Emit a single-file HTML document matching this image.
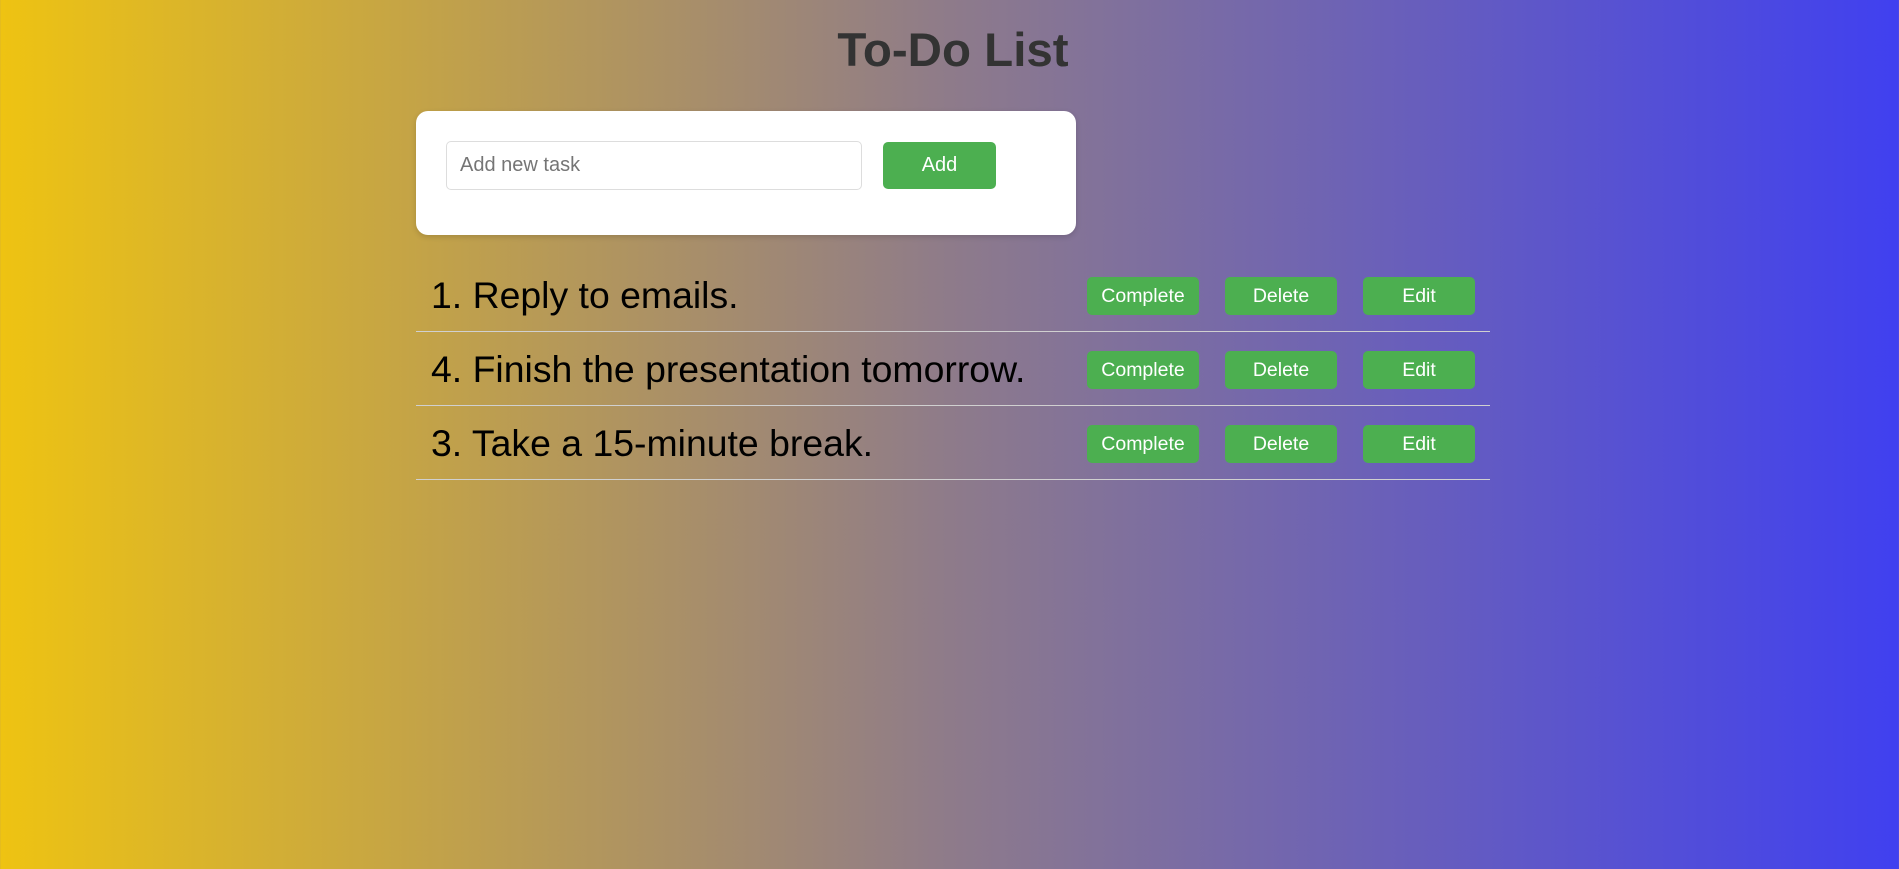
<!DOCTYPE html>
<html><head><meta charset="utf-8"><style>
*{box-sizing:border-box;margin:0;padding:0}
html,body{width:1899px;height:869px;overflow:hidden}
body{background:linear-gradient(to right,#eec312,#8e7b8a 50%,#4040f0);font-family:"Liberation Sans",Arial,sans-serif;position:relative}
h1{position:absolute;top:23px;left:0;width:1906px;text-align:center;font-size:47.5px;font-weight:bold;color:#333;line-height:56px}
.card{position:absolute;left:416px;top:111px;width:660px;height:124px;background:#fff;border-radius:12px;box-shadow:0 2px 6px rgba(0,0,0,.15)}
.inp{position:absolute;left:30px;top:30px;width:416px;height:49px;border:1px solid #ddd;border-radius:5px;font-size:20px;color:#757575;padding-left:13px;line-height:47px}
.add{position:absolute;left:467px;top:31px;width:113px;height:47px;background:#4caf50;border-radius:5px;color:#fff;font-size:20px;text-align:center;line-height:47px}
.row{position:absolute;left:416px;width:1074px;height:74px;border-bottom:1px solid #d0d0d0}
.t{position:absolute;left:15px;top:0;line-height:74px;font-size:37.4px;color:#000}
.b{position:absolute;top:19px;width:112px;height:38px;background:#4caf50;border-radius:5px;color:#fff;font-size:19.5px;text-align:center;line-height:38px}
</style></head><body>
<h1>To-Do List</h1>
<div class="card"><div class="inp">Add new task</div><div class="add">Add</div></div>
<div class="row" style="top:258px"><div class="t">1. Reply to emails.</div><div class="b" style="left:671px">Complete</div><div class="b" style="left:809px">Delete</div><div class="b" style="left:947px">Edit</div></div>
<div class="row" style="top:332px"><div class="t">4. Finish the presentation tomorrow.</div><div class="b" style="left:671px">Complete</div><div class="b" style="left:809px">Delete</div><div class="b" style="left:947px">Edit</div></div>
<div class="row" style="top:406px"><div class="t">3. Take a 15-minute break.</div><div class="b" style="left:671px">Complete</div><div class="b" style="left:809px">Delete</div><div class="b" style="left:947px">Edit</div></div>
</body></html>
